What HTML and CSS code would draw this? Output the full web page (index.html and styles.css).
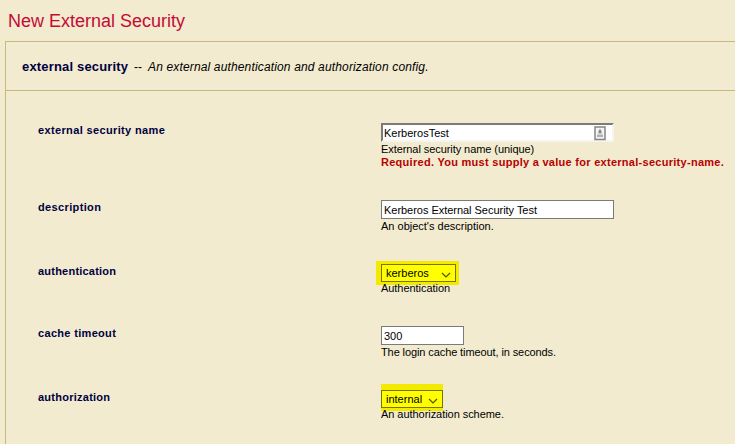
FILE: index.html
```
<!DOCTYPE html>
<html lang="en">
<head>
<meta charset="utf-8">
<title>New External Security</title>
<link rel="stylesheet" href="styles.css">
</head>
<body>
<h1 class="title">New External Security</h1>
<main class="panel">
  <header class="panel-head"><h2 class="name">external security</h2><span class="dash">--</span><em class="summary">An external authentication and authorization config.</em></header>
  <form class="rows">
    <div class="row row-name">
      <label class="label l-name">external security name</label>
      <div class="field">
        <div class="box inset"><span>KerberosTest</span>
          <svg class="key" width="12" height="15" viewBox="0 0 12 15"><rect x="1" y="1" width="10" height="12.5" fill="#f4f4f4" stroke="#858585" stroke-width="1.5"/><path d="M6 3L7.5 5V7.5H4.5V5Z" fill="#888"/><path d="M3 8.5H9V11H3Z" fill="#b0b0b0"/></svg>
        </div>
        <div class="help h-name">External security name (unique)</div>
        <div class="error">Required. You must supply a value for external-security-name.</div>
      </div>
    </div>
    <div class="row">
      <label class="label l-desc">description</label>
      <div class="field">
        <div class="box"><span class="v-desc">Kerberos External Security Test</span></div>
        <div class="help">An object's description.</div>
      </div>
    </div>
    <div class="row row-authn">
      <label class="label l-authn">authentication</label>
      <div class="field">
        <div class="select wide"><span>kerberos</span><svg class="chevron" width="10" height="6" viewBox="0 0 10 6"><path d="M1 1L5 5L9 1"/></svg></div>
        <div class="help h-select">Authentication</div>
      </div>
    </div>
    <div class="row">
      <label class="label l-cache">cache timeout</label>
      <div class="field">
        <div class="box short"><span>300</span></div>
        <div class="help h-cache">The login cache timeout, in seconds.</div>
      </div>
    </div>
    <div class="row">
      <label class="label l-authz">authorization</label>
      <div class="field">
        <div class="select narrow"><span>internal</span><svg class="chevron" width="10" height="6" viewBox="0 0 10 6"><path d="M1 1L5 5L9 1"/></svg></div>
        <div class="help h-select">An authorization scheme.</div>
      </div>
    </div>
  </form>
</main>
</body>
</html>
```
FILE: styles.css
```
* { box-sizing: border-box; }
body {
  margin: 0;
  height: 444px;
  overflow: hidden;
  background: #f2ebcf;
  color: #000;
  font: 11px/13px "Liberation Sans", Arial, sans-serif;
  white-space: nowrap;
}
.title {
  margin: 0;
  height: 41px;
  padding: 10px 0 0 8px;
  font-size: 18px;
  line-height: 22px;
  font-weight: 400;
  color: #c40a35;
}
.panel {
  margin-left: 5px;
  height: 403px;
  border: solid #c9b77c;
  border-width: 1px 0 0 1px;
}
.panel-head {
  display: flex;
  height: 49px;
  padding: 17px 0 0 16px;
  border-bottom: 1px solid #c9b77c;
  font-size: 12px;
  line-height: 16px;
}
.name {
  margin: 0;
  width: 112px;
  font-size: 13px;
  line-height: 16px;
  letter-spacing: 0.17px;
  color: #000040;
}
.dash { width: 14px; }
.summary { letter-spacing: 0.15px; }
.rows { padding: 32px 0 0 32px; }
.row { display: flex; height: 64px; }
.row-name { height: 77px; }
.row-authn { height: 62px; }
.label {
  width: 343px;
  line-height: 14px;
  font-weight: 700;
  color: #000040;
}
.l-name { letter-spacing: 0.36px; }
.l-desc { letter-spacing: 0.36px; }
.l-authn { letter-spacing: 0.22px; }
.l-cache { letter-spacing: 0.32px; }
.l-authz { letter-spacing: 0.25px; }
.box {
  display: flex;
  align-items: center;
  width: 233px;
  height: 19px;
  padding: 1px 0 0 2px;
  border: 1px solid #7a7a7a;
  background: #fff;
}
.v-desc { letter-spacing: -0.03px; }
.inset {
  justify-content: space-between;
  padding: 1px 6px 0 1px;
  border: 2px solid #7e7a78;
  border-right-color: #f6f4ee;
  border-bottom-color: #f6f4ee;
}
.short { width: 83px; }
.help { height: 14px; padding-top: 1px; }
.h-name { letter-spacing: -0.07px; }
.h-select { padding-top: 0; letter-spacing: -0.05px; }
.h-cache { letter-spacing: -0.1px; }
.error {
  font-weight: 700;
  letter-spacing: 0.28px;
  color: #b80000;
}
.select {
  display: flex;
  align-items: center;
  justify-content: space-between;
  height: 18px;
  padding: 1px 4px 0;
  border: 1px solid #777700;
  background: #ffff00;
}
.wide { width: 75px; box-shadow: 0 0 0 3px #f4ea00, -2px 0 0 3px #f4ea00; }
.narrow { width: 62px; box-shadow: 0 -6px 0 #f4ea00, 0 3px 0 #f4ea00; }
.chevron { margin-top: 3px; }
.chevron path { fill: none; stroke: #555500; stroke-width: 1.2; }
```
